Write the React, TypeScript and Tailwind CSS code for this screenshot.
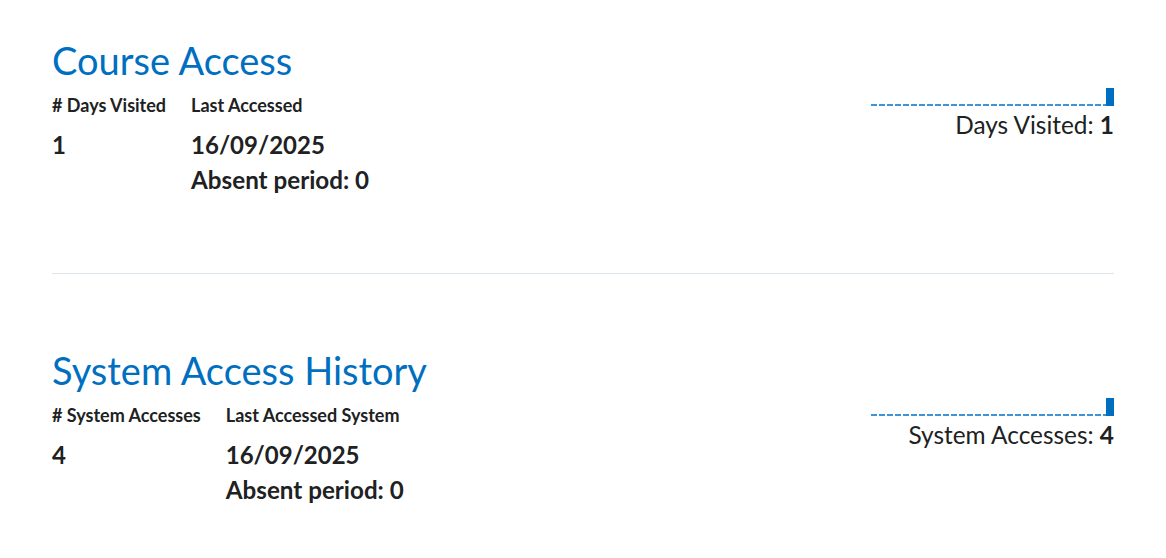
import React from 'react';

interface AccessSectionProps {
  title: string;
  countLabel: string;
  dateLabel: string;
  count: number;
  date: string;
  absent: number;
  chartLabel: string;
}

function MiniChart({ label, value }: { label: string; value: number }) {
  return (
    <div className="flex flex-col items-end pt-[51px]">
      <div className="flex items-end">
        <svg width="235" height="2" className="block">
          <line x1="0" y1="1" x2="235" y2="1" stroke="#3d94d6" strokeWidth="2" strokeDasharray="6 2" />
        </svg>
        <div className="w-[8px] h-[18px] bg-[#006fbf]" />
      </div>
      <div className="text-[24.4px] leading-[28px] text-[#202122] mt-[5px]">
        {label}: <span className="font-bold">{value}</span>
      </div>
    </div>
  );
}

function AccessSection({ title, countLabel, dateLabel, count, date, absent, chartLabel }: AccessSectionProps) {
  return (
    <div className="flex justify-between">
      <div>
        <h2 className="text-[38px] leading-[46px] text-[#006fbf] font-normal">{title}</h2>
        <div className="flex gap-[25px] mt-[11px]">
          <div className="flex flex-col">
            <div className="text-[18px] leading-[22px] font-bold text-[#202122]">{countLabel}</div>
            <div className="text-[24px] leading-[30px] font-bold text-[#202122] mt-[14px]">{count}</div>
          </div>
          <div className="flex flex-col">
            <div className="text-[18px] leading-[22px] font-bold text-[#202122]">{dateLabel}</div>
            <div className="text-[24px] leading-[30px] font-bold text-[#202122] mt-[14px]">{date}</div>
            <div className="text-[24.2px] leading-[30px] font-bold text-[#202122] mt-[5px]">Absent period: {absent}</div>
          </div>
        </div>
      </div>
      <MiniChart label={chartLabel} value={count} />
    </div>
  );
}

export default function App() {
  return (
    <div className="bg-white w-[1166px] h-[558px] px-[52px] pt-[37px] font-['Lato',sans-serif]">
      <AccessSection
        title="Course Access"
        countLabel="# Days Visited"
        dateLabel="Last Accessed"
        count={1}
        date="16/09/2025"
        absent={0}
        chartLabel="Days Visited"
      />
      <div className="border-t border-[#dde5ec] mt-[78px] mb-[73px]" />
      <AccessSection
        title="System Access History"
        countLabel="# System Accesses"
        dateLabel="Last Accessed System"
        count={4}
        date="16/09/2025"
        absent={0}
        chartLabel="System Accesses"
      />
    </div>
  );
}
